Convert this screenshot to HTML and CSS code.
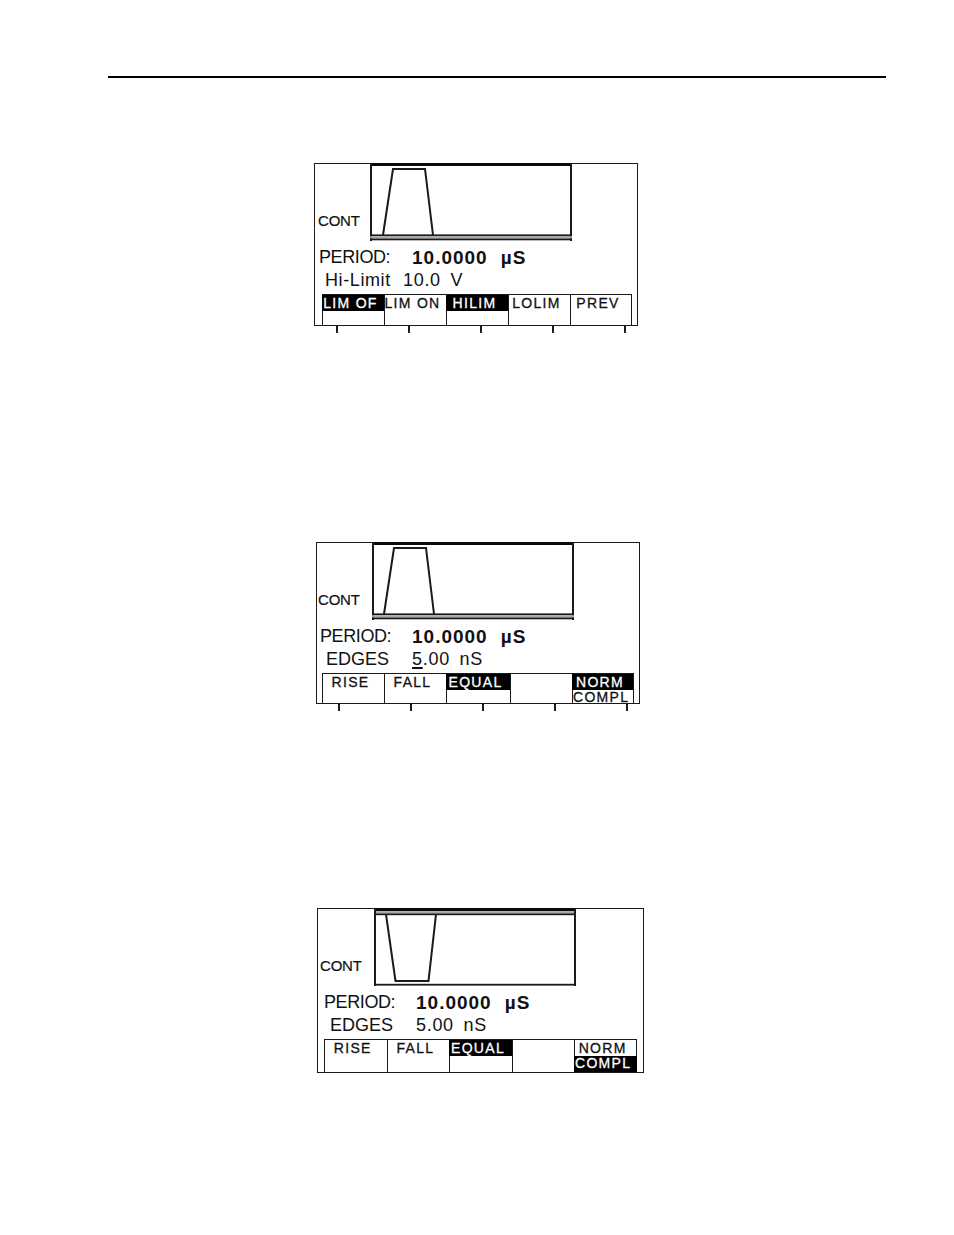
FILE: index.html
```html
<!DOCTYPE html>
<html>
<head>
<meta charset="utf-8">
<title>Pulse generator screens</title>
<link rel="stylesheet" href="styles.css">
</head>
<body>
<div class="page">
  <div class="rule"></div>

  <section class="panel p1">
    <div class="lcd">
      <div class="graph-row">
        <div class="mode">CONT</div>
        <svg class="graph" viewBox="0 0 202 78" width="202" height="78">
          <rect x="0" y="0" width="202" height="3" fill="#0a0a0a"/>
          <rect x="0" y="0" width="2" height="78" fill="#1a1a1a"/>
          <rect x="200" y="0" width="2" height="78" fill="#1a1a1a"/>
          <rect x="0" y="71.4" width="202" height="1.8" fill="#1a1a1a"/>
          <rect x="0" y="73.2" width="202" height="2.3" fill="#a8a8a8"/>
          <rect x="0" y="75.5" width="202" height="1.8" fill="#1a1a1a"/>
          <polyline points="13,72 23,6 55,6 63,72" fill="none" stroke="#1a1a1a" stroke-width="2"/>
        </svg>
      </div>
      <div class="readout">
        <div class="line l1"><span class="lbl">PERIOD:</span><b class="val">10.0000<span class="unit">µS</span></b></div>
        <div class="line l2"><span class="lbl">Hi-Limit</span><span class="val2">10.0 V</span></div>
      </div>
      <div class="softkeys">
        <div class="sk"><div class="lab on">LIM OF</div></div>
        <div class="sk"><div class="lab">LIM ON</div></div>
        <div class="sk"><div class="lab on">HILIM</div></div>
        <div class="sk"><div class="lab">LOLIM</div></div>
        <div class="sk last"><div class="lab">PREV</div></div>
      </div>
    </div>
    <div class="ticks"><i></i><i></i><i></i><i></i><i></i></div>
  </section>

  <section class="panel p2">
    <div class="lcd">
      <div class="graph-row">
        <div class="mode">CONT</div>
        <svg class="graph" viewBox="0 0 202 78" width="202" height="78">
          <rect x="0" y="0" width="202" height="3" fill="#0a0a0a"/>
          <rect x="0" y="0" width="2" height="78" fill="#1a1a1a"/>
          <rect x="200" y="0" width="2" height="78" fill="#1a1a1a"/>
          <rect x="0" y="71.4" width="202" height="1.8" fill="#1a1a1a"/>
          <rect x="0" y="73.2" width="202" height="2.3" fill="#a8a8a8"/>
          <rect x="0" y="75.5" width="202" height="1.8" fill="#1a1a1a"/>
          <polyline points="12,72 22,6 54,6 62,72" fill="none" stroke="#1a1a1a" stroke-width="2"/>
        </svg>
      </div>
      <div class="readout">
        <div class="line l1"><span class="lbl">PERIOD:</span><b class="val">10.0000<span class="unit">µS</span></b></div>
        <div class="line l2"><span class="lbl">EDGES</span><span class="val2"><u class="cursor">5</u>.00 nS</span></div>
      </div>
      <div class="softkeys">
        <div class="sk"><div class="lab">RISE</div></div>
        <div class="sk"><div class="lab">FALL</div></div>
        <div class="sk"><div class="lab on">EQUAL</div></div>
        <div class="sk"><div class="lab"></div></div>
        <div class="sk last"><div class="lab on">NORM</div><div class="lab sub">COMPL</div></div>
      </div>
    </div>
    <div class="ticks"><i></i><i></i><i></i><i></i><i></i></div>
  </section>

  <section class="panel p3">
    <div class="lcd">
      <div class="graph-row">
        <div class="mode">CONT</div>
        <svg class="graph" viewBox="0 0 202 78" width="202" height="78">
          <rect x="0" y="0" width="202" height="3.2" fill="#0a0a0a"/>
          <rect x="0" y="3.2" width="202" height="2.2" fill="#a8a8a8"/>
          <rect x="0" y="5.4" width="202" height="1.8" fill="#1a1a1a"/>
          <rect x="0" y="0" width="2" height="78" fill="#1a1a1a"/>
          <rect x="200" y="0" width="2" height="78" fill="#1a1a1a"/>
          <rect x="0" y="75.8" width="202" height="1.8" fill="#1a1a1a"/>
          <polyline points="12,6.3 21.5,73 54.5,73 62,6.3" fill="none" stroke="#1a1a1a" stroke-width="2"/>
        </svg>
      </div>
      <div class="readout">
        <div class="line l1"><span class="lbl">PERIOD:</span><b class="val">10.0000<span class="unit">µS</span></b></div>
        <div class="line l2"><span class="lbl">EDGES</span><span class="val2">5.00 nS</span></div>
      </div>
      <div class="softkeys">
        <div class="sk"><div class="lab">RISE</div></div>
        <div class="sk"><div class="lab">FALL</div></div>
        <div class="sk"><div class="lab on">EQUAL</div></div>
        <div class="sk"><div class="lab"></div></div>
        <div class="sk last"><div class="lab">NORM</div><div class="lab sub on">COMPL</div></div>
      </div>
    </div>
  </section>
</div>
</body>
</html>
```

FILE: styles.css
```css
html, body {
  margin: 0;
  padding: 0;
  background: #ffffff;
}

.page {
  width: 954px;
  height: 1235px;
  overflow: hidden;
  font-family: "Liberation Sans", Arial, sans-serif;
  color: #111;
}

.rule {
  margin-top: 76px;
  margin-left: 108px;
  width: 778px;
  height: 2px;
  background: #000;
}

.panel {
  display: flex;
  flex-direction: column;
}

.p1 { margin-top: 85px; margin-left: 314px; }
.p2 { margin-top: 209px; margin-left: 316px; }
.p3 { margin-top: 197px; margin-left: 317px; }

.lcd {
  box-sizing: border-box;
  width: 324px;
  height: 163px;
  border: 1px solid #1a1a1a;
  display: flex;
  flex-direction: column;
  background: #fff;
}

.p2 .lcd { height: 162px; }
.p3 .lcd { width: 327px; height: 165px; }

.graph-row {
  display: flex;
  height: 78px;
  margin-top: -1px;
  flex: none;
}

.mode {
  box-sizing: border-box;
  width: 55px;
  display: flex;
  align-items: flex-end;
  padding-left: 3px;
  padding-bottom: 13px;
  font-size: 15px;
  line-height: 15px;
  letter-spacing: -0.2px;
  -webkit-text-stroke: 0.2px currentColor;
}

.p2 .mode { padding-left: 1px; }
.p3 .mode { width: 56px; padding-left: 2px; }

.graph {
  display: block;
  flex: none;
}

.readout {
  margin-top: 5px;
  flex: none;
}

.line {
  height: 23px;
  line-height: 23px;
  font-size: 18px;
  white-space: nowrap;
  display: flex;
}

.lbl {
  display: inline-block;
  flex: none;
}

.l1 .lbl { letter-spacing: -0.4px; }

.p1 .l1 { padding-left: 4px; }
.p1 .l1 .lbl { width: 93px; }
.p1 .l2 { padding-left: 10px; }
.p1 .l2 .lbl { width: 78px; letter-spacing: 0.6px; }

.p2 .l1 { padding-left: 3px; }
.p2 .l1 .lbl { width: 92px; }
.p2 .l2 { padding-left: 9px; }
.p2 .l2 .lbl { width: 86px; }

.p3 .l1 { padding-left: 6px; }
.p3 .l1 .lbl { width: 92px; }
.p3 .l2 { padding-left: 12px; }
.p3 .l2 .lbl { width: 86px; }

.val {
  font-size: 19px;
  font-weight: bold;
  letter-spacing: 1px;
}

.unit {
  margin-left: 13px;
}

.val2 {
  word-spacing: 4px;
  letter-spacing: 0.7px;
}

.cursor {
  text-decoration: underline;
  text-decoration-thickness: 1.5px;
  text-underline-offset: 2px;
}

.softkeys {
  flex: 1;
  margin-top: 2px;
  margin-left: 7px;
  display: grid;
  grid-template-columns: repeat(5, 62px);
}

.p2 .softkeys { margin-left: 5px; grid-template-columns: 62px 62px 64px 62px 62px; }
.p3 .softkeys { margin-left: 6px; grid-template-columns: repeat(5, 62.6px); }

.sk {
  border-top: 1px solid #1a1a1a;
  border-left: 1px solid #1a1a1a;
  display: flex;
  flex-direction: column;
  min-width: 0;
}

.sk.last {
  border-right: 1px solid #1a1a1a;
}

.lab {
  height: 16px;
  line-height: 14px;
  padding-top: 1px;
  box-sizing: border-box;
  margin-left: -1px;
  padding-right: 5px;
  font-size: 14px;
  letter-spacing: 1.3px;
  text-align: center;
  white-space: nowrap;
  -webkit-text-stroke: 0.3px currentColor;
  overflow: visible;
}

.lab.on {
  background: #000;
  color: #fff;
}

.lab.sub {
  height: auto;
  flex: 1;
  padding-top: 0;
  line-height: 14px;
  margin-left: 0;
}

.lab.sub.on {
  margin-left: -1px;
  margin-right: -1px;
}

.ticks {
  display: flex;
  gap: 70px;
  padding-left: 22px;
  height: 7px;
}

.ticks i {
  display: block;
  width: 2px;
  height: 7px;
  background: #1a1a1a;
}
```
